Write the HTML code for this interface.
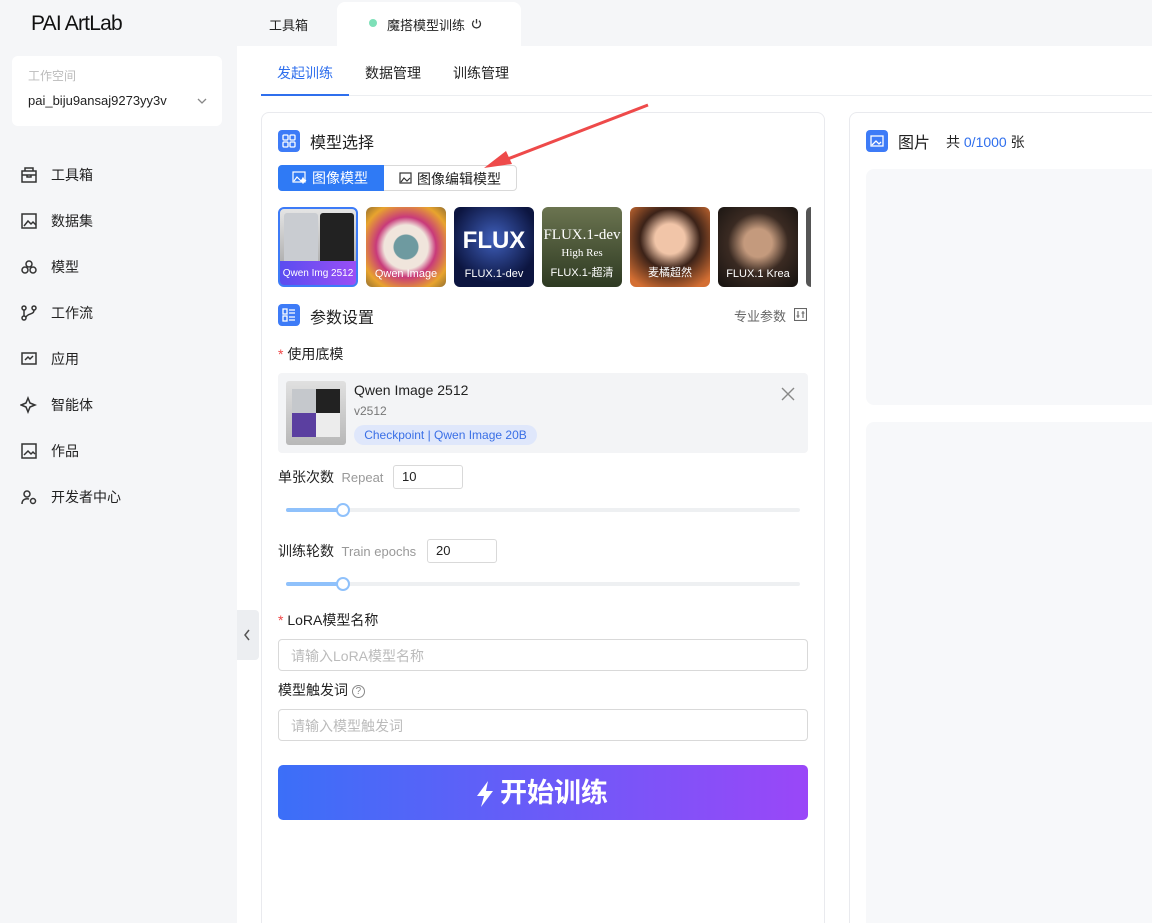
<!DOCTYPE html>
<html><head><meta charset="utf-8"><style>
*{box-sizing:border-box;margin:0;padding:0}
html,body{width:1152px;height:923px;overflow:hidden}
body{background:#f5f6f8;font-family:"Liberation Sans","Noto Sans CJK SC",sans-serif;color:#222;position:relative;font-size:14px}
.abs{position:absolute}
.logo{left:31px;top:12px;font-size:21px;font-weight:500;letter-spacing:-0.8px;color:#111}
.ws{left:12px;top:56px;width:210px;height:70px;background:#fff;border-radius:6px}
.nav{left:20px;font-size:14px;color:#222;display:flex;align-items:center}
.nav svg{width:18px;height:18px;margin-right:13px}
.main{left:237px;top:46px;width:915px;height:877px;background:#fff}
.card{border:1px solid #e9eaee;border-radius:8px;background:#fff}
.ico{width:22px;height:22px;background:#3d7bf7;border-radius:4px;display:flex;align-items:center;justify-content:center}
.thumb{top:207px;width:80px;height:80px;border-radius:6px;overflow:hidden;color:#fff;font-size:11px;text-align:center;white-space:nowrap}
.thumb span{position:absolute;bottom:7px;left:0;right:0}
.inp{border:1px solid #d9d9d9;border-radius:4px;height:32px;width:530px;left:278px;color:#bbb;font-size:14px;padding:6px 12px}
.sl{height:4px;background:#eef0f2;border-radius:2px;left:286px;width:514px}
.slf{height:4px;background:#8fc1fb;border-radius:2px;left:286px;width:57px}
.knob{width:14px;height:14px;border:2px solid #8fc1fb;border-radius:50%;background:#fff}
</style></head><body>
<div class="abs logo">PAI ArtLab</div>
<div class="abs" style="left:269px;top:15px;font-size:13px">工具箱</div>
<div class="abs" style="left:337px;top:2px;width:184px;height:46px;background:#fff;border-radius:8px 8px 0 0"></div>
<div class="abs" style="left:369px;top:19px;width:8px;height:8px;border-radius:50%;background:#7ee0b8"></div>
<div class="abs" style="left:387px;top:15px;font-size:13px">魔搭模型训练</div>
<svg class="abs" style="left:471px;top:18px" width="11" height="11" viewBox="0 0 11 11" fill="none" stroke="#333" stroke-width="1.3"><path d="M5.5 1v4.5M3 2.8a4 4 0 1 0 5 0"/></svg>
<div class="abs ws"></div>
<div class="abs" style="left:28px;top:67px;font-size:12px;color:#bbb">工作空间</div>
<div class="abs" style="left:28px;top:93px;font-size:13px">pai_biju9ansaj9273yy3v</div>
<svg class="abs" style="left:196px;top:96px" width="12" height="10" viewBox="0 0 12 10"><path d="M2 3l4 4 4-4" stroke="#888" fill="none" stroke-width="1.3"/></svg>
<div class="abs nav" style="top:165px"><svg viewBox="0 0 18 18" fill="none" stroke="#333" stroke-width="1.5"><rect x="2" y="5" width="14" height="11"/><path d="M5 5V2h8v3M2 9h14M7 9v2h4V9"/></svg>工具箱</div>
<div class="abs nav" style="top:211px"><svg viewBox="0 0 18 18" fill="none" stroke="#333" stroke-width="1.5"><rect x="2" y="2" width="14" height="14"/><path d="M4 14l4-5 3 3 2-2 3 3"/></svg>数据集</div>
<div class="abs nav" style="top:257px"><svg viewBox="0 0 18 18" fill="none" stroke="#333" stroke-width="1.5"><circle cx="9" cy="6" r="3"/><circle cx="5" cy="12" r="3"/><circle cx="13" cy="12" r="3"/></svg>模型</div>
<div class="abs nav" style="top:303px"><svg viewBox="0 0 18 18" fill="none" stroke="#333" stroke-width="1.5"><circle cx="4" cy="4" r="2"/><circle cx="4" cy="14" r="2"/><circle cx="14" cy="4" r="2"/><path d="M4 6v6M14 6c0 5-6 3-8 7"/></svg>工作流</div>
<div class="abs nav" style="top:349px"><svg viewBox="0 0 18 18" fill="none" stroke="#333" stroke-width="1.5"><rect x="2" y="3" width="14" height="11"/><path d="M5 10l3-3 2 2 3-3"/></svg>应用</div>
<div class="abs nav" style="top:395px"><svg viewBox="0 0 18 18" fill="none" stroke="#333" stroke-width="1.5"><path d="M8 2l2 5 5 2-5 2-2 5-2-5-5-2 5-2z"/></svg>智能体</div>
<div class="abs nav" style="top:441px"><svg viewBox="0 0 18 18" fill="none" stroke="#333" stroke-width="1.5"><rect x="2" y="2" width="14" height="14"/><path d="M4 13l4-4 3 3 2-2 2 2"/></svg>作品</div>
<div class="abs nav" style="top:487px"><svg viewBox="0 0 18 18" fill="none" stroke="#333" stroke-width="1.5"><circle cx="7" cy="6" r="3"/><path d="M2 16c0-4 3-6 7-5"/><circle cx="13" cy="13" r="2.5"/></svg>开发者中心</div>

<div class="abs main"></div>
<div class="abs" style="left:237px;top:610px;width:22px;height:50px;background:#eceef1;border-radius:0 4px 4px 0"></div>
<svg class="abs" style="left:243px;top:629px" width="8" height="12" viewBox="0 0 8 12"><path d="M6 1L2 6l4 5" stroke="#555" fill="none" stroke-width="1.5"/></svg>
<div class="abs" style="left:277px;top:63px;color:#2f6fed;font-size:14px">发起训练</div>
<div class="abs" style="left:365px;top:63px;font-size:14px">数据管理</div>
<div class="abs" style="left:453px;top:63px;font-size:14px">训练管理</div>
<div class="abs" style="left:261px;top:95px;width:891px;height:1px;background:#eceef1"></div>
<div class="abs" style="left:261px;top:94px;width:88px;height:2px;background:#2f6fed"></div>

<div class="abs card" style="left:261px;top:112px;width:564px;height:830px"></div>
<div class="abs ico" style="left:278px;top:130px"><svg width="14" height="14" viewBox="0 0 14 14" fill="none" stroke="#fff" stroke-width="1.3"><rect x="1" y="1" width="5" height="5" rx="1"/><rect x="8" y="1" width="5" height="5" rx="1"/><rect x="1" y="8" width="5" height="5" rx="1"/><rect x="8" y="8" width="5" height="5" rx="1"/></svg></div>
<div class="abs" style="left:310px;top:129px;font-size:16px">模型选择</div>
<div class="abs" style="left:278px;top:165px;width:239px;height:26px;border:1px solid #d9d9d9;border-radius:4px"></div>
<div class="abs" style="left:278px;top:165px;width:106px;height:26px;background:#2f7af5;border-radius:4px 0 0 4px;color:#fff;font-size:14px;line-height:26px;padding-left:34px">图像模型</div>
<svg class="abs" style="left:292px;top:171px" width="15" height="13" viewBox="0 0 15 13" fill="none" stroke="#fff" stroke-width="1.2"><rect x="1" y="1" width="12" height="10"/><path d="M2 10l3-4 3 3"/><path d="M11 7l1 2 2 .5-2 .5-1 2-1-2-2-.5 2-.5z" fill="#fff"/></svg>
<svg class="abs" style="left:399px;top:172px" width="13" height="12" viewBox="0 0 13 12" fill="none" stroke="#333" stroke-width="1.2"><rect x="1" y="1" width="11" height="10"/><path d="M2 10l3-4 3 3 3-3"/></svg>
<div class="abs" style="left:417px;top:169px;font-size:14px">图像编辑模型</div>

<div class="abs thumb" style="left:278px;border:2px solid #3d7bf7;background:linear-gradient(#e5e5e5,#9a9a9a)"><div style="position:absolute;left:4px;top:4px;width:34px;height:56px;background:#c9ccd1;border-radius:3px"></div><div style="position:absolute;left:40px;top:4px;width:34px;height:56px;background:#222;border-radius:3px"></div><div style="position:absolute;left:0;bottom:0;width:100%;height:24px;background:linear-gradient(90deg,#5a4df0,#9a4ef5)"></div><span style="bottom:6px;font-size:10px">Qwen Img 2512</span></div>
<div class="abs thumb" style="left:366px;background:radial-gradient(circle at 50% 50%,#6e9aa0 0 12px,#f0e5dc 13px 22px,#c83a7a 30px,#e8a42e 45px,#333 70px)"><span>Qwen Image</span></div>
<div class="abs thumb" style="left:454px;background:radial-gradient(circle at 50% 40%,#3f5fbb,#0c1540 70%)"><div style="position:absolute;top:20px;left:0;right:0;font-size:24px;font-weight:bold">FLUX</div><span>FLUX.1-dev</span></div>
<div class="abs thumb" style="left:542px;background:linear-gradient(#6b7450,#2e3a22)"><div style="position:absolute;top:20px;left:0;right:0;font-size:15px;font-family:'Liberation Serif',serif">FLUX.1-dev<br><span style="position:static;font-size:11px">High Res</span></div><span>FLUX.1-超清</span></div>
<div class="abs thumb" style="left:630px;background:radial-gradient(circle at 50% 40%,#f1c5a8 0 15px,#3b2218 30px,#d46f33 55px)"><span>麦橘超然</span></div>
<div class="abs thumb" style="left:718px;background:radial-gradient(circle at 50% 45%,#c49a7d 0 14px,#3a2a22 30px,#1a1512 55px)"><span>FLUX.1 Krea</span></div>
<div class="abs thumb" style="left:806px;width:5px;background:#555;border-radius:6px 0 0 6px"></div>

<div class="abs ico" style="left:278px;top:304px"><svg width="14" height="14" viewBox="0 0 14 14" fill="none" stroke="#fff" stroke-width="1.3"><rect x="1" y="1" width="4" height="5"/><rect x="1" y="8" width="4" height="5"/><path d="M7 2h6M7 5h6M7 9h6M7 12h6"/></svg></div>
<div class="abs" style="left:310px;top:304px;font-size:16px">参数设置</div>
<div class="abs" style="left:734px;top:306px;font-size:13px;color:#666">专业参数</div>
<svg class="abs" style="left:794px;top:308px" width="13" height="13" viewBox="0 0 13 13" fill="none" stroke="#666" stroke-width="1.1"><rect x="0.5" y="0.5" width="12" height="12"/><path d="M4 3v7M9 3v7M2.5 8h3M7.5 5h3"/></svg>
<div class="abs" style="left:278px;top:344px;font-size:14px"><span style="color:#f04747">*</span> 使用底模</div>
<div class="abs" style="left:278px;top:373px;width:530px;height:80px;background:#f3f4f6;border-radius:4px"></div>
<div class="abs" style="left:286px;top:381px;width:60px;height:64px;background:linear-gradient(#e0e0e0,#b8b8b8);border-radius:3px"><div style="position:absolute;left:6px;top:8px;width:24px;height:48px;background:linear-gradient(#c5c8cc 50%,#5b3fa0 50%)"></div><div style="position:absolute;left:30px;top:8px;width:24px;height:48px;background:linear-gradient(#222 50%,#ececec 50%)"></div></div>
<div class="abs" style="left:354px;top:382px;font-size:14px">Qwen Image 2512</div>
<div class="abs" style="left:354px;top:404px;font-size:12px;color:#777">v2512</div>
<div class="abs" style="left:354px;top:425px;width:183px;height:20px;background:#dfe7fb;border-radius:10px;color:#3a6fe6;font-size:12px;line-height:20px;text-align:center">Checkpoint | Qwen Image 20B</div>
<svg class="abs" style="left:781px;top:387px" width="14" height="14" viewBox="0 0 14 14"><path d="M1 1l12 12M13 1L1 13" stroke="#888" stroke-width="1.4"/></svg>

<div class="abs" style="left:278px;top:467px;font-size:14px">单张次数 <span style="color:#999;font-size:13px">&nbsp;Repeat</span></div>
<div class="abs" style="left:393px;top:465px;width:70px;height:24px;border:1px solid #d9d9d9;border-radius:3px;padding:3px 8px;font-size:13px">10</div>
<div class="abs sl" style="top:508px"></div><div class="abs slf" style="top:508px"></div><div class="abs knob" style="left:336px;top:503px"></div>
<div class="abs" style="left:278px;top:541px;font-size:14px">训练轮数 <span style="color:#999;font-size:13px">&nbsp;Train epochs</span></div>
<div class="abs" style="left:427px;top:539px;width:70px;height:24px;border:1px solid #d9d9d9;border-radius:3px;padding:3px 8px;font-size:13px">20</div>
<div class="abs sl" style="top:582px"></div><div class="abs slf" style="top:582px"></div><div class="abs knob" style="left:336px;top:577px"></div>

<div class="abs" style="left:278px;top:610px;font-size:14px"><span style="color:#f04747">*</span> LoRA模型名称</div>
<div class="abs inp" style="top:639px">请输入LoRA模型名称</div>
<div class="abs" style="left:278px;top:680px;font-size:14px">模型触发词 <span style="display:inline-block;width:13px;height:13px;border:1px solid #888;border-radius:50%;font-size:10px;line-height:11px;text-align:center;color:#888;vertical-align:1px">?</span></div>
<div class="abs inp" style="top:709px">请输入模型触发词</div>
<div class="abs" style="left:278px;top:765px;width:530px;height:55px;border-radius:5px;background:linear-gradient(90deg,#3b6ff8,#9a47f8)"></div>
<svg class="abs" style="left:474px;top:780px" width="22" height="28" viewBox="0 0 22 28"><path d="M14 1L3 16h7l-3 11L19 11h-7l2-10z" fill="#fff"/></svg>
<div class="abs" style="left:500px;top:775px;color:#fff;font-size:27px;font-weight:bold;line-height:36px">开始训练</div>

<div class="abs card" style="left:849px;top:112px;width:320px;height:830px"></div>
<div class="abs ico" style="left:866px;top:130px"><svg width="14" height="14" viewBox="0 0 14 14" fill="none" stroke="#fff" stroke-width="1.3"><rect x="1" y="2" width="12" height="10"/><path d="M2 11l4-4 3 3 2-2"/></svg></div>
<div class="abs" style="left:898px;top:129px;font-size:16px">图片</div>
<div class="abs" style="left:946px;top:132px;font-size:14px">共 <span style="color:#2f6fed">0/1000</span> 张</div>
<div class="abs" style="left:866px;top:169px;width:300px;height:236px;background:#f7f8fa;border-radius:8px"></div>
<div class="abs" style="left:866px;top:422px;width:300px;height:520px;background:#f7f8fa;border-radius:8px"></div>

<svg class="abs" style="left:0;top:0" width="1152" height="923"><path d="M648 105L505 160" stroke="#ee4a4a" stroke-width="3"/><path d="M484 168l22-17 6 13z" fill="#ee4a4a"/></svg>
</body></html>
